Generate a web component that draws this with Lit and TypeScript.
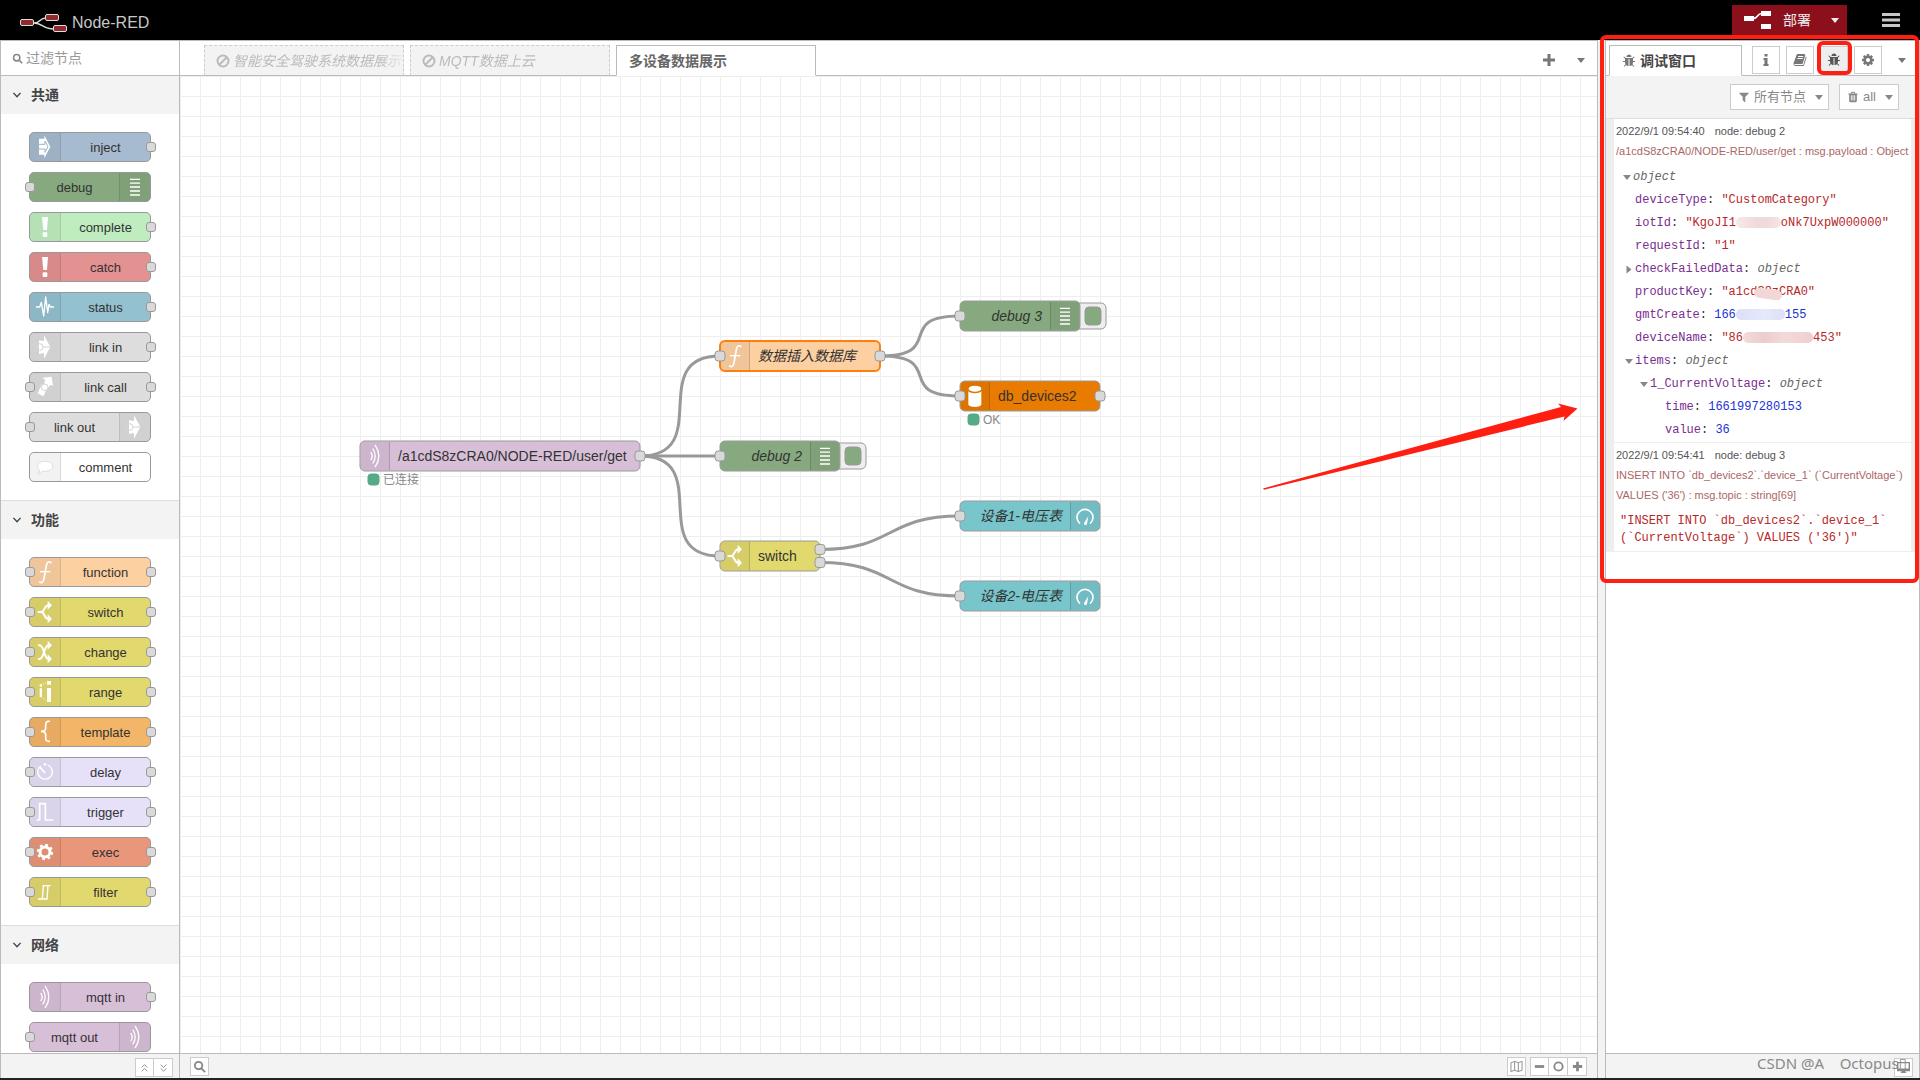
import { LitElement, html, svg, css, nothing } from "lit";
import type { SVGTemplateResult, TemplateResult } from "lit";
import { customElement, state } from "lit/decorators.js";
import { classMap } from "lit/directives/class-map.js";
import { styleMap } from "lit/directives/style-map.js";

type Art = (bg: string) => SVGTemplateResult;

interface PaletteNode {
  label: string;
  color: string;
  icon: string;
  inputs?: boolean;
  outputs?: boolean;
  iconRight?: boolean;
}

interface FlowNode {
  x: number;
  y: number;
  w: number;
  label: string;
  color: string;
  icon: string;
  input?: boolean;
  outputs?: number[];
  iconRight?: boolean;
  italic?: boolean;
  selected?: boolean;
  button?: boolean;
  status?: string;
}

/* Node glyphs, drawn on a 60 x 90 grid. */
const ART: Record<string, Art> = {
  inject: (bg) => svg`<path fill="#fff" d="M12 20H28V10L46 44L28 79V68H12Z"/><path fill="none" stroke=${bg} stroke-width="3" d="M11 37H30V27L39 44L30 61V51H11"/>`,
  debug: () => svg`<path stroke="#fff" stroke-width="4" d="M15 22H45M15 33.500H45M15 45H45M15 57H45M15 69H45"/>`,
  bang: () => svg`<path fill="#fff" d="M21 15H39L36 54H25Z"/><rect x="23" y="61" width="14" height="14" rx="3" fill="#fff"/>`,
  status: () => svg`<path fill="none" stroke="#fff" stroke-width="4" stroke-linejoin="round" d="M3 45H14L19 31L26 72L32 15L38 62L42 37L46 45H57"/>`,
  link: (bg) => svg`<path fill="#fff" d="M12 25L27 27V10L46 45L27 80V63L12 66Z"/><circle cx="14" cy="45" r="10" fill="#fff" stroke=${bg} stroke-width="3"/><path stroke=${bg} stroke-width="3" d="M24 45H46"/><rect x="0" y="30" width="12" height="30" fill=${bg}/>`,
  linkcall: (bg) => svg`<path fill="#fff" d="M8 64L21 36L38 46L25 73Z"/><path fill="#fff" d="M22 17L50 14L54 42L47 38L41 46L27 36L31 24Z"/><circle cx="29" cy="46" r="10" fill="#fff" stroke=${bg} stroke-width="3"/>`,
  comment: () => svg`<path fill="#fff" stroke="#ddd" stroke-width="3" d="M30 28C43 28 53 34 53 43S43 58 30 58C27 58 25 58 23 57C20 62 15 65 9 66C13 62 14 58 14 54C10 51 7 47 7 43C7 34 17 28 30 28Z"/>`,
  fn: () => svg`<path fill="none" stroke="#fff" stroke-width="5" stroke-linecap="round" d="M48 17C40 12 36 15 34 26L27 65C25 76 21 79 14 75"/><path stroke="#fff" stroke-width="4" d="M15 44H46"/>`,
  switch: () => svg`<path fill="none" stroke="#fff" stroke-width="6" d="M8 45H20C30 42 28 25 40 25M20 45C30 48 28 66 40 66"/><path fill="#fff" d="M38 11L51 25L38 38ZM38 52L51 66L38 79Z"/>`,
  change: () => svg`<path fill="none" stroke="#fff" stroke-width="6" d="M9 25H14C27 25 27 66 40 66M9 66H14C27 66 27 25 40 25"/><path fill="#fff" d="M38 11L51 25L38 38ZM38 52L51 66L38 79Z"/>`,
  range: () => svg`<path fill="#fff" d="M14 22h7v7h-7zM14 34h7v27h-7zM36 12h12v11h-12zM36 33h12v42h-12z"/><path stroke="#fff" stroke-width="2" stroke-dasharray="4 3" d="M23 22L35 16M23 62L35 71"/>`,
  template: () => svg`<path fill="none" stroke="#fff" stroke-width="5" d="M45 13C34 12 32 17 32 24V34C32 40 28 43 18 43C28 43 32 46 32 52V62C32 69 34 74 45 73"/>`,
  delay: () => svg`<path fill="none" stroke="#fff" stroke-width="4" d="M38 24A22 22 0 1 1 17 27"/><path fill="none" stroke="#fff" stroke-width="5" stroke-linecap="round" d="M16 32L29 46"/><circle cx="30" cy="22" r="4" fill="#fff"/>`,
  trigger: () => svg`<path fill="none" stroke="#fff" stroke-width="5" d="M5 69H14V20H31V69H55"/>`,
  exec: () => svg`<circle cx="30" cy="45" r="15" fill="none" stroke="#fff" stroke-width="9"/><circle cx="30" cy="45" r="21" fill="none" stroke="#fff" stroke-width="7" stroke-dasharray="8.250 8.250"/>`,
  filter: () => svg`<path fill="none" stroke="#fff" stroke-width="4" d="M9 66H22L25 26H47M22 66H36L39 26"/>`,
  mqtt: () => svg`<path fill="none" stroke="#fff" stroke-width="4" stroke-linecap="round" d="M18 34Q25 45 18 56M24 24Q37 45 24 66M31 13Q52 45 31 77"/>`,
  db: () => svg`<ellipse cx="30" cy="23" rx="19" ry="9" fill="#fff"/><path fill="#fff" d="M10 31C16 39 44 39 49 31V71C44 80 16 80 10 71Z"/>`,
  gauge: () => svg`<path fill="none" stroke="#fff" stroke-width="5" d="M15 68A24 24 0 1 1 45 68"/><path fill="#fff" d="M27 66L40 46L36 69A4 4 0 0 1 27 66Z"/>`,
};

/* The icon strip is 5% darker than the node body. */
const shade = (color: string) => `color-mix(in srgb, ${color} 95%, #000)`;

/* Toolbar glyphs, on a 1792 grid. */
const GLYPH = {
  bug: "M1696 960q0 26-19 45t-45 19h-224q0 171-67 290l208 209q19 19 19 45t-19 45q-18 19-45 19t-45-19l-198-197q-5 5-15 13t-42 28.500-65 36.500-82 29-97 13v-896h-128v896q-51 0-101.500-13.500t-87-33-66-39-43.500-32.500l-15-14-183 207q-20 21-48 21-24 0-43-16-19-18-20.500-44.500t15.500-46.500l202-227q-58-114-58-274h-224q-26 0-45-19t-19-45 19-45 45-19h224v-294l-173-173q-19-19-19-45t19-45 45-19 45 19l173 173h844l173-173q19-19 45-19t45 19 19 45-19 45l-173 173v294h224q26 0 45 19t19 45zm-480-576h-640q0-133 93.500-226.500t226.500-93.500 226.500 93.500 93.500 226.500z",
  cog: "M1152 896q0-106-75-181t-181-75-181 75-75 181 75 181 181 75 181-75 75-181zm512-109v222q0 12-8 23t-20 13l-185 28q-19 54-39 91 35 50 107 138 10 12 10 25t-9 23q-27 37-99 108t-94 71q-12 0-26-9l-138-108q-44 23-91 38-16 136-29 186-7 28-36 28h-222q-14 0-24.500-8.500t-11.500-21.500l-28-184q-49-16-90-37l-141 107q-10 9-25 9-14 0-25-11-126-114-165-168-7-10-7-23 0-12 8-23 15-21 51-66.500t54-70.500q-27-50-41-99l-183-27q-13-2-21-12.500t-8-23.500v-222q0-12 8-23t19-13l186-28q14-46 39-92-40-57-107-138-10-12-10-24 0-10 9-23 26-36 98.500-107.500t94.500-71.500q13 0 26 10l138 107q44-23 91-38 16-136 29-186 7-28 36-28h222q14 0 24.500 8.500t11.500 21.500l28 184q49 16 90 37l142-107q9-9 24-9 13 0 25 10 129 119 165 170 7 8 7 22 0 12-8 23-15 21-51 66.500t-54 70.500q26 50 41 98l183 28q13 2 21 12.500t8 23.500z",
  trash: "M704 1376v-704q0-14-9-23t-23-9h-64q-14 0-23 9t-9 23v704q0 14 9 23t23 9h64q14 0 23-9t9-23zm256 0v-704q0-14-9-23t-23-9h-64q-14 0-23 9t-9 23v704q0 14 9 23t23 9h64q14 0 23-9t9-23zm256 0v-704q0-14-9-23t-23-9h-64q-14 0-23 9t-9 23v704q0 14 9 23t23 9h64q14 0 23-9t9-23zm-544-992h448l-48-117q-7-9-17-11h-317q-10 2-17 11zm928 32v64q0 14-9 23t-23 9h-96v948q0 83-47 143.500t-113 60.500h-832q-66 0-113-58.500t-47-141.500v-952h-96q-14 0-23-9t-9-23v-64q0-14 9-23t23-9h309l70-167q15-37 54-63t79-26h320q40 0 79 26t54 63l70 167h309q14 0 23 9t9 23z",
  filter: "M1595 295q17 41-14 70l-493 493v742q0 42-39 59-13 5-25 5-27 0-45-19l-256-256q-19-19-19-45v-486l-493-493q-31-29-14-70 17-39 59-39h1280q42 0 59 39z",
  book: "M1703 478q40 57 18 129l-275 906q-19 64-76.500 107.500t-122.500 43.500h-923q-77 0-148.500-53.500t-99.500-131.500q-24-67-2-127 0-4 3-27t4-37q1-8-3-21.500t-3-19.500q2-11 8-21t16.500-23.500 16.500-23.500q23-38 45-91.500t30-91.500q3-10 .5-30t-.5-28q3-11 17-28t17-23q21-36 42-92t25-90q1-9-2.500-32t.5-28q4-13 22-30.500t22-22.500q19-26 42.500-84.500t27.500-96.500q1-8-3-25.500t-2-26.500q2-8 9-18t18-23 17-21q8-12 16.500-30.500t15-35 16-36 19.500-32 26.500-23.500 36-11.500 47.500 5.500l-1 3q38-9 51-9h761q74 0 114 56t18 130l-274 906q-36 119-71.500 153.500t-128.500 34.500h-869q-27 0-38 15-11 16-1 43 24 70 144 70h923q29 0 56-15.500t35-41.500l300-987q7-22 5-57 38 15 59 43zm-1064 2q-4 13 2 22.500t20 9.500h608q13 0 25.500-9.500t16.500-22.500l21-64q4-13-2-22.500t-20-9.500h-608q-13 0-25.500 9.500t-16.500 22.500zm-83 256q-4 13 2 22.500t20 9.500h608q13 0 25.500-9.500t16.500-22.500l21-64q4-13-2-22.500t-20-9.500h-608q-13 0-25.500 9.500t-16.500 22.500z",
};

const glyph = (d: string) => html`<svg class="fa" viewBox="0 0 1792 1792" aria-hidden="true"><path d=${d}></path></svg>`;
const line = (d: string, width = 2) =>
  html`<svg class="fa" viewBox="0 0 14 14" aria-hidden="true"><path d=${d} fill="none" stroke="currentColor" stroke-width=${width}></path></svg>`;
const SEARCH = "M10 6A4 4 0 1 1 2 6A4 4 0 1 1 10 6M9 9L13 13";

const PALETTE: { title: string; nodes: PaletteNode[] }[] = [
  {
    title: "共通",
    nodes: [
      { label: "inject", color: "#a6bbcf", icon: "inject", outputs: true },
      { label: "debug", color: "#87a980", icon: "debug", inputs: true, iconRight: true },
      { label: "complete", color: "#c0edc0", icon: "bang", outputs: true },
      { label: "catch", color: "#e49191", icon: "bang", outputs: true },
      { label: "status", color: "#94c1d0", icon: "status", outputs: true },
      { label: "link in", color: "#dddddd", icon: "link", outputs: true },
      { label: "link call", color: "#dddddd", icon: "linkcall", inputs: true, outputs: true },
      { label: "link out", color: "#dddddd", icon: "link", inputs: true, iconRight: true },
      { label: "comment", color: "#ffffff", icon: "comment" },
    ],
  },
  {
    title: "功能",
    nodes: [
      { label: "function", color: "#fdd0a2", icon: "fn", inputs: true, outputs: true },
      { label: "switch", color: "#e2d96e", icon: "switch", inputs: true, outputs: true },
      { label: "change", color: "#e2d96e", icon: "change", inputs: true, outputs: true },
      { label: "range", color: "#e2d96e", icon: "range", inputs: true, outputs: true },
      { label: "template", color: "#f3b567", icon: "template", inputs: true, outputs: true },
      { label: "delay", color: "#e6e0f8", icon: "delay", inputs: true, outputs: true },
      { label: "trigger", color: "#e6e0f8", icon: "trigger", inputs: true, outputs: true },
      { label: "exec", color: "#e9967a", icon: "exec", inputs: true, outputs: true },
      { label: "filter", color: "#e2d96e", icon: "filter", inputs: true, outputs: true },
    ],
  },
  {
    title: "网络",
    nodes: [
      { label: "mqtt in", color: "#d8bfd8", icon: "mqtt", outputs: true },
      { label: "mqtt out", color: "#d8bfd8", icon: "mqtt", inputs: true, iconRight: true },
    ],
  },
];

/* x is the left edge, y the vertical centre. */
const FLOW: FlowNode[] = [
  { x: 180, y: 380, w: 280, label: "/a1cdS8zCRA0/NODE-RED/user/get", color: "#d8bfd8", icon: "mqtt", outputs: [0], status: "已连接" },
  { x: 540, y: 280, w: 160, label: "数据插入数据库", color: "#fdd0a2", icon: "fn", input: true, outputs: [0], italic: true, selected: true },
  { x: 780, y: 240, w: 120, label: "debug 3", color: "#87a980", icon: "debug", input: true, iconRight: true, italic: true, button: true },
  { x: 780, y: 320, w: 140, label: "db_devices2", color: "#e97b00", icon: "db", input: true, outputs: [0], status: "OK" },
  { x: 540, y: 380, w: 120, label: "debug 2", color: "#87a980", icon: "debug", input: true, iconRight: true, italic: true, button: true },
  { x: 540, y: 480, w: 100, label: "switch", color: "#e2d96e", icon: "switch", input: true, outputs: [-6.5, 6.5] },
  { x: 780, y: 440, w: 140, label: "设备1-电压表", color: "#78c6cc", icon: "gauge", input: true, iconRight: true, italic: true },
  { x: 780, y: 520, w: 140, label: "设备2-电压表", color: "#78c6cc", icon: "gauge", input: true, iconRight: true, italic: true },
];

const WIRES: [number, number, number, number][] = [
  [460, 380, 540, 280],
  [460, 380, 540, 380],
  [460, 380, 540, 480],
  [700, 280, 780, 240],
  [700, 280, 780, 320],
  [640, 473.5, 780, 440],
  [640, 486.5, 780, 520],
];

const wirePath = ([x1, y1, x2, y2]: [number, number, number, number]) => {
  const reach = 0.75 * Math.min(100, Math.hypot(x2 - x1, y2 - y1));
  return `M${x1} ${y1}C${x1 + reach} ${y1} ${x2 - reach} ${y2} ${x2} ${y2}`;
};

@customElement("app-root")
export class AppRoot extends LitElement {
  static styles = css`
    :host {
      display: flex;
      flex-direction: column;
      height: 100vh;
      box-sizing: border-box;
      border-bottom: 2px solid #222326;
      background: #f3f3f3;
      color: #333;
      font: 14px/20px "Liberation Sans", "Noto Sans CJK SC", sans-serif;
      overflow: hidden;
    }
    * { box-sizing: border-box; }
    button, input { font: inherit; color: inherit; margin: 0; }
    button { display: flex; align-items: center; justify-content: center; padding: 0; cursor: pointer; }
    a { color: inherit; text-decoration: none; }
    .fa { width: 14px; height: 14px; flex: none; fill: currentColor; display: block; }
    .caret { flex: none; border: 4px solid transparent; border-top: 5px solid currentColor; border-bottom: 0; }

    header { display: flex; align-items: center; flex: none; height: 40px; padding: 0 20px; background: #000; color: #c7c7c7; }
    .brand { display: flex; align-items: center; gap: 5px; flex: 1; padding-top: 5px; font-size: 16px; }
    .brand svg { width: 47px; height: 20px; }
    .deploy { display: flex; height: 30px; background: #8c101c; color: #eee; }
    .deploy button { border: 0; background: none; gap: 12px; padding: 0 12px; }
    .deploy button + button { padding: 0 8px; width: 24px; }
    .deploy svg { width: 27px; height: 18px; }
    .menu { border: 0; background: none; width: 18px; margin-left: 35px; }
    .menu svg { width: 18px; height: 14px; }

    main { display: flex; flex: 1; gap: 7px; min-height: 0; }
    .editor { display: flex; flex: 1; min-width: 0; border: 1px solid #bbb; border-bottom: 0; background: #fff; }
    .palette { display: flex; flex-direction: column; flex: none; width: 179px; border-right: 1px solid #bbb; }
    .search { display: flex; align-items: center; gap: 3px; flex: none; height: 35px; padding: 0 0 0 11px; border-bottom: 1px solid #bbb; color: #888; }
    .search .fa { width: 11px; height: 11px; }
    .search input { width: 100%; border: 0; padding: 0; outline: 0; background: none; height: 24px; }
    .search input::placeholder { color: #999; opacity: 1; }
    .groups { flex: 1; min-height: 0; overflow: hidden; }
    .group { border-bottom: 1px solid #ddd; }
    .group h2 { margin: 0; font-size: 14px; }
    .group h2 button { width: 100%; height: 38px; justify-content: flex-start; gap: 9px; padding-left: 11px; border: 0; background: #f3f3f3; color: #444; font-weight: bold; }
    .group h2 .fa { width: 10px; height: 10px; }
    .nodes { display: flex; flex-direction: column; gap: 10px; padding: 18px 28px; }
    .pnode { position: relative; display: flex; height: 30px; border: 1px solid #999; border-radius: 5px; font-size: 13px; line-height: 28px; }
    .pnode.right { flex-direction: row-reverse; }
    .pnode .label { flex: 1; padding-top: 1px; text-align: center; }
    .pnode .icon { display: flex; justify-content: center; align-items: center; width: 31px; background: rgba(0, 0, 0, .05); border-right: 1px solid rgba(0, 0, 0, .1); border-radius: 4px 0 0 4px; }
    .pnode.right .icon { border-right: 0; border-left: 1px solid rgba(0, 0, 0, .1); border-radius: 0 4px 4px 0; }
    .pnode svg { width: 20px; height: 30px; }
    .port { position: absolute; top: 9px; width: 10px; height: 10px; border: 1px solid #999; border-radius: 3px; background: #d9d9d9; }
    .port.in { left: -5px; }
    .port.out { right: -6px; }

    .foot { display: flex; flex: none; height: 25px; padding: 3px 10px 0; border-top: 1px solid #bbb; background: #f3f3f3; color: #888; }
    .foot button { width: 19px; height: 19px; border: 1px solid #ccc; background: #fff; }
    .foot .fa { width: 13px; height: 13px; }
    .foot.end { justify-content: flex-end; padding: 4px 6px 0; }
    .foot .push { margin-left: auto; margin-right: 4px; }
    .joined { display: flex; }
    .joined button + button { width: 20px; margin-left: -1px; }

    .workspace { display: flex; flex-direction: column; flex: 1; min-width: 0; }
    .tabs { display: flex; align-items: flex-end; flex: none; height: 35px; box-shadow: inset 0 -1px #bbb; }
    .flows { display: flex; flex: 1; gap: 6px; padding-left: 24px; min-width: 0; }
    .tab { display: flex; align-items: center; gap: 3px; width: 200px; height: 31px; padding: 0 12px; border: 1px solid #bbb; border-bottom-color: #fff; background: #fff; color: #666; font-weight: bold; white-space: nowrap; overflow: hidden; }
    .tab.off { padding: 0 0 0 11px; border-style: dashed; border-color: #ccc; border-bottom: 1px solid #bbb; background: #f3f3f3; color: #bbb; font-weight: normal; font-style: italic; }
    .tab.off span { flex: 1; overflow: hidden; -webkit-mask-image: linear-gradient(90deg, #000 145px, transparent 175px); }
    .tabbtn { width: 32px; height: 32px; border: 0; background: none; color: #777; }
    .canvas { flex: 1; min-height: 0; display: block; width: 100%; background: #fff; }
    .canvas text { fill: #333; font-size: 14px; }
    .canvas text.it { font-style: italic; }
    .canvas text.status { fill: #888; font-size: 12px; }

    .sidebar { position: relative; display: flex; flex-direction: column; flex: none; width: 315px; border: 1px solid #bbb; border-bottom: 0; background: #fff; }
    .stabs { display: flex; align-items: flex-end; flex: none; height: 35px; padding-left: 3px; box-shadow: inset 0 -1px #bbb; }
    .stab { display: flex; align-items: center; gap: 4px; width: 133px; height: 31px; padding-left: 12px; border: 1px solid #bbb; border-bottom-color: #fff; background: #fff; color: #444; font-weight: bold; }
    .stab .fa, .sbtn .fa { color: #777; }
    .sbtns { display: flex; gap: 6px; padding: 0 4px 2px 10px; }
    .sbtn { width: 28px; height: 28px; border: 1px solid #ccc; background: #fff; }
    .sbtn.on { position: relative; background: #eee; }
    .sbtn.on .fa { color: #555; }
    .sbtn.on::after { content: ""; position: absolute; inset: -6px -5px -2px -4px; border: 4px solid #ff1f12; border-radius: 6px; z-index: 2; }
    .toolbar { display: flex; justify-content: flex-end; gap: 10px; flex: none; height: 43px; padding: 8px 20px; border-bottom: 1px solid #ddd; background: #f3f3f3; color: #888; }
    .toolbar button { height: 26px; gap: 4px; padding: 0 5px 0 7px; border: 1px solid #ccc; background: #fff; font-size: 13px; }
    .toolbar .fa { width: 12px; height: 12px; }
    .toolbar .caret { margin-left: 5px; }
    .messages { flex: 1; min-height: 0; overflow: hidden; }
    .msg { border: 0 solid #eee; border-width: 0 8px 1px; padding: 2px 2px 0; font-size: 11px; }
    .meta { display: flex; gap: 10px; color: #555; }
    .topic { color: #a66; }
    .data { font: 12px/23px "Liberation Mono", monospace; padding-top: 5px; }
    .text { padding: 8px 4px 4px; line-height: 17px; }
    .row { display: flex; align-items: center; height: 23px; white-space: pre; }
    .l0 { padding-left: 5px; }
    .l1 { padding-left: 7px; }
    .l2 { padding-left: 22px; }
    .l3 { padding-left: 37px; }
    .row button, .row .pad { flex: none; width: 12px; height: 23px; padding-left: 2px; border: 0; background: none; color: #888; justify-content: flex-start; }
    .row .closed { transform: rotate(-90deg); }
    .key { color: #792e90; }
    .type { color: #666; font-style: italic; }
    .str { color: #b72828; }
    .num { color: #2033d6; }
    .smudge { position: relative; display: inline-block; height: 11px; border-radius: 5px; vertical-align: middle; background: linear-gradient(90deg, #f8e9e9, #f2d9d9 45%, #f0dada 70%, #f6e6e6); }
    .m45 { width: 45px; }
    .m49 { width: 49px; background: linear-gradient(90deg, #dcdff7, #e6e8fb 60%, #dcdff7); }
    .m70 { width: 70px; background: linear-gradient(90deg, #f3dcdc, #eccccc 30%, #f3dada 60%, #efcfcf); }
    .veil { position: relative; }
    .veil::after { content: ""; position: absolute; left: -3px; right: -3px; top: 4px; height: 10px; border-radius: 5px; background: #f2d7d7; transform: rotate(8deg); }
    .frame { position: absolute; top: -6px; left: -6px; right: 0; height: 548px; border: 4px solid #ff1f12; border-radius: 6px; pointer-events: none; }
    .watermark { position: absolute; right: 12px; bottom: 5px; color: #8a8a8a; font: 15px/20px "Noto Sans", "DejaVu Sans", sans-serif; white-space: pre; pointer-events: none; }
  `;

  @state() private query = "";

  private onFilter(e: Event) {
    this.query = (e.target as HTMLInputElement).value.trim().toLowerCase();
  }

  private paletteNode(n: PaletteNode) {
    return html`<div class=${classMap({ pnode: true, right: !!n.iconRight })} style=${styleMap({ backgroundColor: n.color })}>
      <div class="icon"><svg viewBox="0 0 60 90" aria-hidden="true">${ART[n.icon](shade(n.color))}</svg></div>
      <div class="label">${n.label}</div>
      ${n.inputs ? html`<i class="port in"></i>` : nothing}
      ${n.outputs ? html`<i class="port out"></i>` : nothing}
    </div>`;
  }

  private port(x: number, y: number) {
    return svg`<rect x=${x - 5} y=${y - 5} width="10" height="10" rx="3" fill="#d9d9d9" stroke="#999"/>`;
  }

  private flowNode(n: FlowNode) {
    const top = n.y - 15;
    const iconX = n.iconRight ? n.w - 30 : 0;
    return svg`<g transform="translate(${n.x} ${top})">
      ${n.button
        ? svg`<rect x=${n.w - 6} y="2" width="32" height="26" rx="5" fill="#eee" stroke="#999"/>
            <rect x=${n.w + 5} y="6" width="16" height="18" rx="4" fill=${n.color} stroke="#999"/>`
        : nothing}
      <rect width=${n.w} height="30" rx="5" fill=${n.color} stroke=${n.selected ? "#ff7f0e" : "#999"} stroke-width=${n.selected ? 2 : 1}/>
      <path transform="translate(${iconX} 0)" fill="#000" fill-opacity=".05"
        d=${n.iconRight ? "M0 1H26Q29 1 29 5V25Q29 29 26 29H0Z" : "M5 1H30V29H5Q1 29 1 25V5Q1 1 5 1Z"}/>
      <path d="M${n.iconRight ? iconX + 0.5 : 29.5} 1V29" stroke="#000" stroke-opacity=".15"/>
      <svg x=${iconX + 5} y="0" width="20" height="30" viewBox="0 0 60 90">${ART[n.icon](shade(n.color))}</svg>
      <text class=${n.italic ? "it" : ""} x=${n.iconRight ? iconX - 8 : 38} y="20" text-anchor=${n.iconRight ? "end" : "start"}>${n.label}</text>
      ${n.input ? this.port(0, 15) : nothing}
      ${(n.outputs ?? []).map((dy) => this.port(n.w, 15 + dy))}
      ${n.status
        ? svg`<rect x="8" y="33" width="11" height="11" rx="3" fill="#5a8" stroke="#5a8"/>
            <text class="status" x="23" y="43">${n.status}</text>`
        : nothing}
    </g>`;
  }

  private row(level: number, key: string, value: TemplateResult, toggle?: "open" | "closed") {
    return html`<div class="row l${level}">${toggle
      ? html`<button aria-label="展开 ${key}"><i class="caret ${toggle}"></i></button>`
      : html`<i class="pad"></i>`}${key ? html`<span class="key">${key}</span>: ` : nothing}${value}</div>`;
  }

  private renderPalette() {
    return html`<nav class="palette">
      <div class="search">
        ${line(SEARCH)}
        <input type="text" aria-label="过滤节点" placeholder="过滤节点" @input=${this.onFilter} />
      </div>
      <div class="groups">
        ${PALETTE.map((g) => html`<section class="group">
          <h2><button>${line("M2 4L7 9.500L12 4")}${g.title}</button></h2>
          <div class="nodes">${g.nodes.filter((n) => n.label.includes(this.query)).map((n) => this.paletteNode(n))}</div>
        </section>`)}
      </div>
      <div class="foot end">
        <div class="joined">
          <button aria-label="全部折叠">${line("M4 7L7 4L10 7M4 11L7 8L10 11", 1)}</button>
          <button aria-label="全部展开">${line("M4 4L7 7L10 4M4 8L7 11L10 8", 1)}</button>
        </div>
      </div>
    </nav>`;
  }

  private renderWorkspace() {
    const ban = line("M12.500 7A5.500 5.500 0 1 1 1.500 7A5.500 5.500 0 1 1 12.500 7M3 11L11 3");
    return html`<section class="workspace">
      <div class="tabs">
        <div class="flows">
          <a class="tab off" href="#flow1">${ban}<span>智能安全驾驶系统数据展示</span></a>
          <a class="tab off" href="#flow2">${ban}<span>MQTT数据上云</span></a>
          <a class="tab" href="#flow3">多设备数据展示</a>
        </div>
        <button class="tabbtn" aria-label="添加流程">${line("M7 1V13M1 7H13", 3)}</button>
        <button class="tabbtn" aria-label="流程列表"><i class="caret"></i></button>
      </div>
      <svg class="canvas">
        <defs>
          <pattern id="grid" width="20" height="20" patternUnits="userSpaceOnUse">
            <path d="M.5 20V.5H20" fill="none" stroke="#eee"></path>
          </pattern>
        </defs>
        <rect width="100%" height="100%" fill="url(#grid)"></rect>
        ${WIRES.map((w) => svg`<path d=${wirePath(w)} fill="none" stroke="#999" stroke-width="3"/>`)}
        ${FLOW.map((n) => this.flowNode(n))}
        <path fill="#ff1f12" d="M1083 412.500L1381 331L1378 327.500L1397.500 332.500L1383.500 345L1384.500 340.500L1084 413.700Z"></path>
      </svg>
      <div class="foot">
        <button aria-label="搜索">${line(SEARCH)}</button>
        <button class="push" aria-label="导航器">${line("M1 3L5 1.500L9 3L13 1.500V11L9 12.500L5 11L1 12.500ZM5 1.500V11M9 3V12.500", 1)}</button>
        <div class="joined">
          <button aria-label="缩小">${line("M2 7H12", 3)}</button>
          <button aria-label="重置缩放">${line("M11.500 7A4.500 4.500 0 1 1 2.500 7A4.500 4.500 0 1 1 11.500 7")}</button>
          <button aria-label="放大">${line("M2 7H12M7 2V12", 3)}</button>
        </div>
      </div>
    </section>`;
  }

  private renderSidebar() {
    const obj = html`<span class="type">object</span>`;
    return html`<aside class="sidebar">
      <div class="stabs">
        <a class="stab" href="#debug">${glyph(GLYPH.bug)}调试窗口</a>
        <div class="sbtns">
          <button class="sbtn" aria-label="信息">
            <svg class="fa" viewBox="0 0 14 14"><path d="M5.500 1h3v2.500h-3zM4.500 5h4v6h1v2h-5v-2h1V7h-1z"></path></svg>
          </button>
          <button class="sbtn" aria-label="帮助">${glyph(GLYPH.book)}</button>
          <button class="sbtn on" aria-label="调试">${glyph(GLYPH.bug)}</button>
          <button class="sbtn" aria-label="配置">${glyph(GLYPH.cog)}</button>
        </div>
        <button class="tabbtn" aria-label="更多"><i class="caret"></i></button>
      </div>
      <div class="toolbar">
        <button>${glyph(GLYPH.filter)}所有节点<i class="caret"></i></button>
        <button>${glyph(GLYPH.trash)}all<i class="caret"></i></button>
      </div>
      <div class="messages">
        <article class="msg">
          <div class="meta"><span>2022/9/1 09:54:40</span><span>node: debug 2</span></div>
          <div class="topic">/a1cdS8zCRA0/NODE-RED/user/get : msg.payload : Object</div>
          <div class="data">
            ${this.row(0, "", obj, "open")}
            ${this.row(1, "deviceType", html`<span class="str">"CustomCategory"</span>`)}
            ${this.row(1, "iotId", html`<span class="str">"KgoJI1<i class="smudge m45"></i>oNk7UxpW000000"</span>`)}
            ${this.row(1, "requestId", html`<span class="str">"1"</span>`)}
            ${this.row(1, "checkFailedData", obj, "closed")}
            ${this.row(1, "productKey", html`<span class="str">"a1cd<span class="veil">S8z</span>CRA0"</span>`)}
            ${this.row(1, "gmtCreate", html`<span class="num">166<i class="smudge m49"></i>155</span>`)}
            ${this.row(1, "deviceName", html`<span class="str">"86<i class="smudge m70"></i>453"</span>`)}
            ${this.row(1, "items", obj, "open")}
            ${this.row(2, "1_CurrentVoltage", obj, "open")}
            ${this.row(3, "time", html`<span class="num">1661997280153</span>`)}
            ${this.row(3, "value", html`<span class="num">36</span>`)}
          </div>
        </article>
        <article class="msg">
          <div class="meta"><span>2022/9/1 09:54:41</span><span>node: debug 3</span></div>
          <div class="topic">INSERT INTO \`db_devices2\`.\`device_1\` (\`CurrentVoltage\`) VALUES ('36') : msg.topic : string[69]</div>
          <div class="data text str">"INSERT INTO \`db_devices2\`.\`device_1\` (\`CurrentVoltage\`) VALUES ('36')"</div>
        </article>
      </div>
      <div class="foot end">
        <button aria-label="显示器">
          <svg class="fa" viewBox="0 0 14 14"><path fill-rule="evenodd" d="M0 1H14V11H9V12H10V13H4V12H5V11H0ZM1.500 2.500V8H12.500V2.500Z"></path></svg>
        </button>
      </div>
      <div class="frame"></div>
      <div class="watermark">CSDN @A    Octopus▯</div>
    </aside>`;
  }

  render() {
    return html`
      <header>
        <div class="brand">
          <svg viewBox="0 0 47 20" aria-hidden="true">
            <path d="M14 10C21 10 19 5 26 5M14 10C23 10 22 16 34 16" fill="none" stroke="#ddd" stroke-width="1.500"></path>
            <g fill="#8f2b2f" stroke="#ddd">
              <rect x=".5" y="6.500" width="13" height="6" rx="1.500"></rect>
              <rect x="25.500" y="1.500" width="13" height="6" rx="1.500"></rect>
              <rect x="33.500" y="12.500" width="13" height="6" rx="1.500"></rect>
            </g>
          </svg>
          <span>Node-RED</span>
        </div>
        <div class="deploy">
          <button>
            <svg viewBox="0 0 27 18" aria-hidden="true">
              <path fill="#fff" d="M0 5h10v5H0zM17 0h10v5H17zM17 13h10v5H17z"></path>
              <path d="M9 7.500C15 7.500 12 2.500 18 2.500" fill="none" stroke="#fff" stroke-width="1.500"></path>
            </svg>部署
          </button>
          <button aria-label="部署选项"><i class="caret"></i></button>
        </div>
        <button class="menu" aria-label="菜单">
          <svg viewBox="0 0 18 14"><path d="M0 1.500H18M0 7H18M0 12.500H18" stroke="#c7c7c7" stroke-width="3"></path></svg>
        </button>
      </header>
      <main>
        <div class="editor">${this.renderPalette()}${this.renderWorkspace()}</div>
        ${this.renderSidebar()}
      </main>
    `;
  }
}
